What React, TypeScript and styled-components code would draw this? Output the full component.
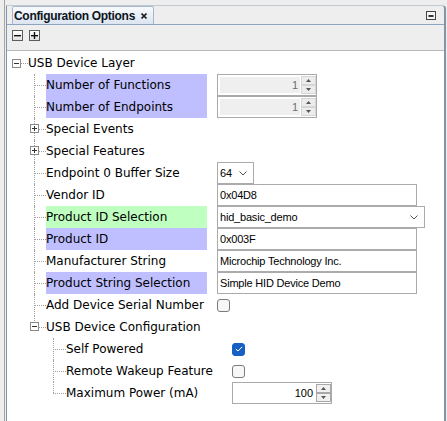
import React from "react";
import styled, { createGlobalStyle } from "styled-components";

const FIELD_FONT = `"Liberation Sans", Arial, sans-serif`;

const GlobalStyle = createGlobalStyle`
  html, body { margin: 0; padding: 0; background: #eeeeee; }
  body {
    font-family: "DejaVu Sans", Verdana, sans-serif;
    font-size: 12px;
    color: #000;
  }
`;

const Shell = styled.div`
  width: 442px;
  height: 421px;
  box-sizing: border-box;
  margin-left: 4px;
  padding: 5px 0 0 1px;
  border-left: 1px solid #a4a4a4;
`;

const Panel = styled.div`
  width: 440px;
  height: 416px;
  box-sizing: border-box;
  border-top: 1px solid #c3c9d1;
  border-left: 1px solid #8395ab;
  border-right: 2px solid #8395ab;
  border-top-right-radius: 4px;
  display: flex;
  flex-direction: column;
  overflow: hidden;
`;

const Header = styled.div`
  height: 19px;
  box-sizing: border-box;
  border-bottom: 1px solid #8ea5bf;
  display: flex;
  align-items: center;
  padding: 0 8px 0 5px;
`;

const Tab = styled.div`
  width: 142px;
  height: 18px;
  box-sizing: border-box;
  border: 1px solid #a6b7cb;
  border-bottom: none;
  border-radius: 2px 2px 0 0;
  background: linear-gradient(#f8fafd, #dbe5f1);
  display: flex;
  align-items: center;
  gap: 6px;
  padding-left: 1px;
`;

const TabTitle = styled.span`
  font-family: ${FIELD_FONT};
  font-weight: bold;
  font-size: 12px;
  letter-spacing: -0.3px;
  color: #0d1420;
`;

const MinButton = styled.svg`
  margin-left: auto;
`;

const Toolbar = styled.div`
  height: 25px;
  box-sizing: border-box;
  display: flex;
  align-items: flex-start;
  gap: 6px;
  padding: 5px 0 0 5px;
`;

const ToolButton = styled.div`
  width: 11px;
  height: 11px;
  box-sizing: border-box;
  border: 1px solid #5c5c5c;
  background: linear-gradient(#ffffff, #e2e2e2);
  display: grid;
  place-items: center;
`;

const Content = styled.div`
  flex: 1;
  background: #fff;
  border-top: 1px solid #b8b8b8;
  padding-top: 1px;
`;

const Row = styled.div<{ $indent: number }>`
  display: flex;
  align-items: center;
  height: 22px;
  padding-left: ${(p) => p.$indent}px;
`;

const Branch = styled.span<{ $width: number; $last?: boolean }>`
  position: relative;
  flex: none;
  width: ${(p) => p.$width}px;
  height: 22px;
  &::before {
    content: "";
    position: absolute;
    left: 0;
    top: 0;
    height: ${(p) => (p.$last ? 11 : 22)}px;
    border-left: 1px dotted #a0a0a0;
  }
  &::after {
    content: "";
    position: absolute;
    left: 0;
    right: 0;
    top: 11px;
    border-top: 1px dotted #a0a0a0;
  }
`;

const RootLink = styled.span`
  width: 7px;
  flex: none;
  border-top: 1px dotted #a0a0a0;
`;

const ExpanderBox = styled.svg<{ $floating?: boolean }>`
  flex: none;
  display: block;
  ${(p) =>
    p.$floating
      ? `position: absolute; left: -4px; top: 6px; z-index: 1;`
      : ``}
`;

const Label = styled.span<{ $width?: number; $hl?: "blue" | "green" }>`
  display: block;
  flex: none;
  width: ${(p) => (p.$width ? `${p.$width}px` : "auto")};
  height: 22px;
  line-height: 22px;
  white-space: nowrap;
  background: ${(p) =>
    p.$hl === "blue" ? "#bfbfff" : p.$hl === "green" ? "#bfffbf" : "transparent"};
`;

const Value = styled.div`
  margin-left: 10px;
  display: flex;
  align-items: center;
`;

const TextBox = styled.div<{ $width: number }>`
  width: ${(p) => p.$width}px;
  height: 22px;
  box-sizing: border-box;
  border: 1px solid #ababab;
  background: #fff;
  padding: 0 6px 0 2px;
  display: flex;
  align-items: center;
  justify-content: space-between;
  font-family: ${FIELD_FONT};
  font-size: 11px;
  letter-spacing: -0.2px;
  color: #000;
  white-space: nowrap;
`;

const Spinner = styled.div`
  width: 100px;
  height: 22px;
  box-sizing: border-box;
  border: 1px solid #aaaaaa;
  background: #fff;
  display: flex;
  padding: 1px 0 1px 2px;
`;

const SpinField = styled.div<{ $disabled?: boolean }>`
  flex: 1;
  margin: 1px 1px 1px 0;
  background: ${(p) => (p.$disabled ? "#efefef" : "#fff")};
  color: ${(p) => (p.$disabled ? "#6e6e6e" : "#000")};
  text-align: right;
  padding-right: 2px;
  font-family: ${FIELD_FONT};
  font-size: 11px;
  line-height: 16px;
`;

const SpinButtons = styled.div`
  width: 15px;
  display: flex;
  flex-direction: column;
`;

const SpinButton = styled.div<{ $disabled?: boolean }>`
  flex: 1;
  border: 1px solid ${(p) => (p.$disabled ? "#d6d6d6" : "#a8a8a8")};
  background: ${(p) => (p.$disabled ? "#ececec" : "#f0f0f0")};
  display: grid;
  place-items: center;
`;

const CheckBox = styled.span<{ $checked?: boolean }>`
  width: 13px;
  height: 13px;
  box-sizing: border-box;
  border-radius: 3px;
  border: 1px solid ${(p) => (p.$checked ? "#1660c4" : "#7a7a7a")};
  background: ${(p) => (p.$checked ? "#1660c4" : "#f7f7f7")};
  display: grid;
  place-items: center;
`;

const Expander = ({ open, floating }: { open: boolean; floating?: boolean }) => (
  <ExpanderBox $floating={floating} width="9" height="9" viewBox="0 0 9 9">
    <rect x="0.5" y="0.5" width="8" height="8" fill="#fff" stroke="#8a8a8a" />
    <line x1="2" y1="4.5" x2="7" y2="4.5" stroke="#333" />
    {!open && <line x1="4.5" y1="2" x2="4.5" y2="7" stroke="#333" />}
  </ExpanderBox>
);

const Arrow = ({ up }: { up?: boolean }) => (
  <svg width="5" height="3" viewBox="0 0 5 3">
    <polygon points={up ? "2.5,0 5,3 0,3" : "0,0 5,0 2.5,3"} fill="#555" />
  </svg>
);

const NumberSpinner = ({ value, disabled }: { value: string; disabled?: boolean }) => (
  <Spinner>
    <SpinField $disabled={disabled}>{value}</SpinField>
    <SpinButtons>
      <SpinButton $disabled={disabled}>
        <Arrow up />
      </SpinButton>
      <SpinButton $disabled={disabled}>
        <Arrow />
      </SpinButton>
    </SpinButtons>
  </Spinner>
);

const Chevron = () => (
  <svg width="8" height="5" viewBox="0 0 8 5">
    <polyline points="0.5,0.5 4,4 7.5,0.5" fill="none" stroke="#555" />
  </svg>
);

const Check = ({ checked }: { checked?: boolean }) => (
  <CheckBox $checked={checked}>
    {checked && (
      <svg width="8" height="6" viewBox="0 0 8 6">
        <polyline points="0.8,3 3,5 7.2,0.8" fill="none" stroke="#fff" strokeWidth="1" />
      </svg>
    )}
  </CheckBox>
);

type Hl = "blue" | "green";

const Item = ({
  level,
  label,
  hl,
  expander,
  last,
  children,
}: {
  level: 1 | 2;
  label: string;
  hl?: Hl;
  expander?: "open" | "closed";
  last?: boolean;
  children?: React.ReactNode;
}) => (
  <Row $indent={level === 1 ? 27 : 46}>
    <Branch $width={level === 1 ? 12 : 13} $last={last}>
      {expander && <Expander open={expander === "open"} floating />}
    </Branch>
    <Label $width={level === 1 ? 161 : 156} $hl={hl}>
      {label}
    </Label>
    {children && <Value>{children}</Value>}
  </Row>
);

export default function App() {
  return (
    <>
      <GlobalStyle />
      <Shell>
        <Panel>
          <Header>
            <Tab>
              <TabTitle>Configuration Options</TabTitle>
              <svg width="6" height="6" viewBox="0 0 6 6">
                <path d="M0.5 0.5 L5.5 5.5 M5.5 0.5 L0.5 5.5" stroke="#222" strokeWidth="1.6" />
              </svg>
            </Tab>
            <MinButton width="10" height="9" viewBox="0 0 10 9">
              <rect x="0.5" y="0.5" width="9" height="8" fill="#f4f4f4" stroke="#444" />
              <rect x="2.5" y="4" width="5" height="2" fill="#333" />
            </MinButton>
          </Header>
          <Toolbar>
            <ToolButton>
              <svg width="7" height="7" viewBox="0 0 7 7">
                <rect x="0" y="3" width="7" height="1.4" fill="#111" />
              </svg>
            </ToolButton>
            <ToolButton>
              <svg width="7" height="7" viewBox="0 0 7 7">
                <rect x="0" y="3" width="7" height="1.4" fill="#111" />
                <rect x="2.8" y="0" width="1.4" height="7" fill="#111" />
              </svg>
            </ToolButton>
          </Toolbar>
          <Content>
            <Row $indent={5}>
              <Expander open />
              <RootLink />
              <Label>USB Device Layer</Label>
            </Row>
            <Item level={1} label="Number of Functions" hl="blue">
              <NumberSpinner value="1" disabled />
            </Item>
            <Item level={1} label="Number of Endpoints" hl="blue">
              <NumberSpinner value="1" disabled />
            </Item>
            <Item level={1} label="Special Events" expander="closed" />
            <Item level={1} label="Special Features" expander="closed" />
            <Item level={1} label="Endpoint 0 Buffer Size">
              <TextBox $width={37}>
                64
                <Chevron />
              </TextBox>
            </Item>
            <Item level={1} label="Vendor ID">
              <TextBox $width={200}>0x04D8</TextBox>
            </Item>
            <Item level={1} label="Product ID Selection" hl="green">
              <TextBox $width={208}>
                hid_basic_demo
                <Chevron />
              </TextBox>
            </Item>
            <Item level={1} label="Product ID" hl="blue">
              <TextBox $width={200}>0x003F</TextBox>
            </Item>
            <Item level={1} label="Manufacturer String">
              <TextBox $width={200}>Microchip Technology Inc.</TextBox>
            </Item>
            <Item level={1} label="Product String Selection" hl="blue">
              <TextBox $width={200}>Simple HID Device Demo</TextBox>
            </Item>
            <Item level={1} label="Add Device Serial Number">
              <Check />
            </Item>
            <Item level={1} label="USB Device Configuration" expander="open" last />
            <Item level={2} label="Self Powered">
              <Check checked />
            </Item>
            <Item level={2} label="Remote Wakeup Feature">
              <Check />
            </Item>
            <Item level={2} label="Maximum Power (mA)" last>
              <NumberSpinner value="100" />
            </Item>
          </Content>
        </Panel>
      </Shell>
    </>
  );
}
